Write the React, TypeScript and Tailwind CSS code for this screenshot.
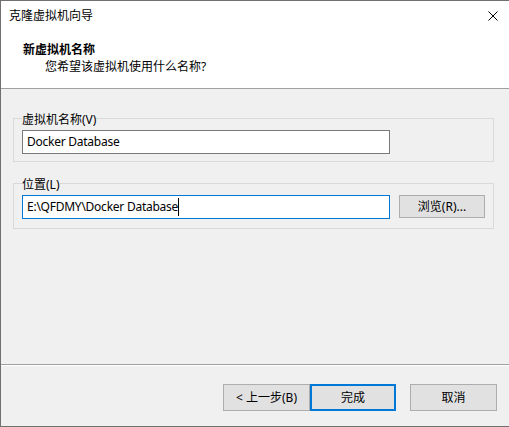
import React from "react";

export default function App() {
  return (
    <div className="w-[509px] h-[427px] bg-[#f0f0f0] border-l border-t border-b border-[#707070] flex flex-col text-[12px] text-black font-['Noto_Sans','Noto_Sans_CJK_SC',sans-serif] overflow-hidden">
      {/* Title + header (white) */}
      <div className="bg-white border-b border-[#a0a0a0] h-[88px] flex flex-col">
        <div className="h-[30px] flex items-center justify-between pl-[8px] pr-[11px]">
          <span className="leading-[16px]">克隆虚拟机向导</span>
          <svg width="10" height="10" viewBox="0 0 10 10" className="block">
            <path d="M0.5 0.5 L9.5 9.5 M9.5 0.5 L0.5 9.5" stroke="#000" strokeWidth="1" fill="none" />
          </svg>
        </div>
        <div className="pt-[11px] pl-[22px] font-bold leading-[16px]">新虚拟机名称</div>
        <div className="mt-[1px] pl-[44px] leading-[16px]">您希望该虚拟机使用什么名称?</div>
      </div>

      {/* Body */}
      <div className="flex-1 flex flex-col pl-[12px] pr-[15px]">
        <fieldset className="mt-[20px] border border-[#d9d9d9] pl-[8px] pr-[8px] pb-[7px]">
          <legend className="pt-[4px] leading-[14px]">虚拟机名称(V)</legend>
          <div className="mt-[3px] w-[368px] h-[24px] bg-white border border-[#7a7a7a] flex items-center pl-[4px] tracking-[-0.25px]">
            Docker Database
          </div>
        </fieldset>

        <fieldset className="mt-[12px] border border-[#d9d9d9] pl-[8px] pr-[8px] pb-[9px]">
          <legend className="pt-[4px] leading-[14px]">位置(L)</legend>
          <div className="mt-[3px] flex items-start gap-[9px]">
            <div className="w-[368px] h-[24px] bg-white border border-[#0078d7] flex items-center pl-[4px] tracking-[-0.25px]">
              <span>E:\QFDMY\Docker Database</span>
              <span className="inline-block w-[1px] h-[18px] bg-black" />
            </div>
            <div className="w-[86px] h-[23px] bg-[#e1e1e1] border border-[#adadad] flex items-center justify-center">
              浏览(R)...
            </div>
          </div>
        </fieldset>
      </div>

      {/* Footer */}
      <div className="h-[62px] border-t border-[#a0a0a0] shadow-[inset_0_1px_0_#ffffff] flex justify-end items-start pt-[19px] pr-[12px]">
        <div className="w-[87px] h-[27px] bg-[#e1e1e1] border border-[#adadad] flex items-center justify-center">
          &lt; 上一步(B)
        </div>
        <div className="w-[86px] h-[27px] bg-[#e1e1e1] border-2 border-[#0078d7] flex items-center justify-center">
          完成
        </div>
        <div className="ml-[14px] w-[87px] h-[27px] bg-[#e1e1e1] border border-[#adadad] flex items-center justify-center">
          取消
        </div>
      </div>
    </div>
  );
}
